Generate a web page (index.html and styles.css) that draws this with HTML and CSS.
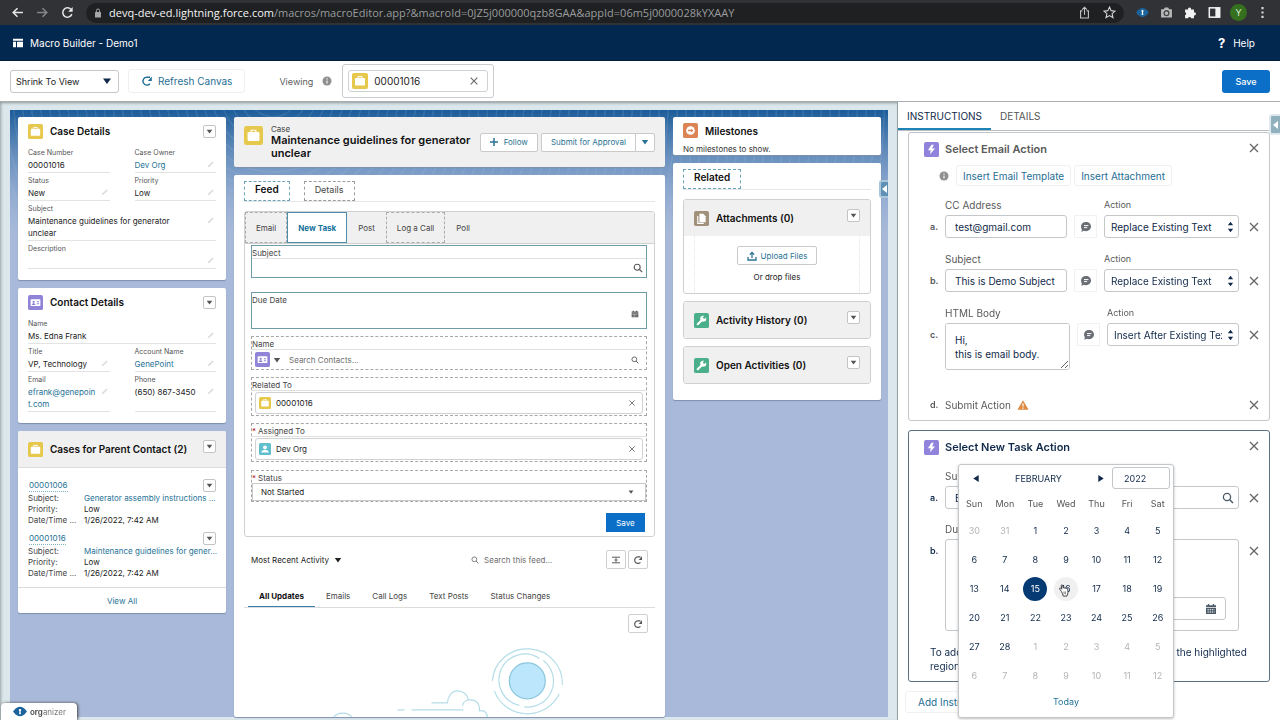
FILE: index.html
```html
<!DOCTYPE html>
<html lang="en">
<head>
    <meta charset="UTF-8">
    <meta name="viewport" content="width=device-width, initial-scale=1.0">
    <title>Macro Builder - Demo1</title>
    <link rel="stylesheet" href="styles.css">
</head>
<body>
    <!-- Shared icons -->
    <svg class="sprite" aria-hidden="true">
        <symbol id="i-down" viewBox="0 0 10 10"><path d="M1 2.5h8L5 8z" fill="currentColor"/></symbol>
        <symbol id="i-close" viewBox="0 0 12 12"><path d="M2 2l8 8M10 2l-8 8" stroke="currentColor" stroke-width="1.3" fill="none"/></symbol>
        <symbol id="i-search" viewBox="0 0 12 12"><circle cx="5" cy="5" r="3.6" fill="none" stroke="currentColor" stroke-width="1.3"/><path d="M7.7 7.7L11 11" stroke="currentColor" stroke-width="1.5"/></symbol>
        <symbol id="i-pencil" viewBox="0 0 10 10"><path d="M1 9l.6-2L7 1.8l1.4 1.4L3 8.5z" fill="currentColor"/></symbol>
        <symbol id="i-refresh" viewBox="0 0 14 14"><path d="M10.4 10.2A4.6 4.6 0 1 1 7 2.600h3.500" fill="none" stroke="currentColor" stroke-width="1.600"/><path d="M12.600 1.800v5.200H8z" fill="currentColor"/></symbol>
        <symbol id="i-case" viewBox="0 0 16 16"><rect width="16" height="16" rx="2" fill="#e5c84c"/><path d="M6 5V3.6h4V5" fill="none" stroke="#fff" stroke-width="1"/><rect x="3" y="5" width="10" height="7.6" rx="1" fill="#fff"/></symbol>
        <symbol id="i-contact" viewBox="0 0 16 16"><rect width="16" height="16" rx="2" fill="#9084d8"/><rect x="2.8" y="4.4" width="10.4" height="7.4" rx="1" fill="#fff"/><circle cx="6" cy="7.2" r="1.2" fill="#9084d8"/><path d="M4 10.6c0-2.4 4-2.4 4 0zM9.4 6.6h2.4v1H9.4zM9.4 8.8h2.4v1H9.4z" fill="#9084d8"/></symbol>
        <symbol id="i-user" viewBox="0 0 16 16"><rect width="16" height="16" rx="2" fill="#5fbfcc"/><circle cx="8" cy="5.8" r="2.6" fill="#fff"/><path d="M3 12.8c0-5 10-5 10 0z" fill="#fff"/></symbol>
        <symbol id="i-wrench" viewBox="0 0 16 16"><rect width="16" height="16" rx="2" fill="#4caf8c"/><path d="M4 12l5-5" stroke="#fff" stroke-width="2.2" stroke-linecap="round"/><path d="M12.900 5.200a3.200 3.200 0 1 1-3.600-2.300c.6-.1 1.100 0 1.500.2L9.200 4.800l1.700 1.700 1.800-1.700z" fill="#fff"/></symbol>
        <symbol id="i-files" viewBox="0 0 16 16"><rect width="16" height="16" rx="2" fill="#a2917a"/><path d="M4 5.4v7.8h6.4" fill="none" stroke="#fff" stroke-width="1.2"/><path d="M5.8 3h4l2.6 2.6V12H5.8z" fill="#fff"/></symbol>
        <symbol id="i-milestone" viewBox="0 0 16 16"><rect width="16" height="16" rx="2" fill="#dd8456"/><circle cx="8" cy="8" r="4.6" fill="#fff"/><path d="M5.4 7.200h3.200V6l2.600 2-2.600 2V8.800H5.400z" fill="#dd8456"/></symbol>
        <symbol id="i-bolt" viewBox="0 0 16 16"><rect width="16" height="16" rx="2" fill="#8f83dc"/><path d="M8 3L4.200 8.800h3L6.400 13l5.400-6.200H8.600L10.400 3z" fill="#fff"/></symbol>
        <symbol id="i-comment" viewBox="0 0 12 12"><path d="M6 1c3 0 5 2 5 4.600S9 10.200 6 10.200c-.8 0-1.500-.1-2.200-.4L1.400 11l.5-2.600C1.300 7.700 1 6.700 1 5.600 1 3 3 1 6 1z" fill="#6a6f75"/><path d="M4 4.600h4.400M4 6.600h3.200" stroke="#fff"/></symbol>
        <symbol id="i-info" viewBox="0 0 12 12"><circle cx="6" cy="6" r="5.400" fill="#8f8f8f"/><path d="M6 5.400V9M6 2.800v1.400" stroke="#fff" stroke-width="1.300"/></symbol>
        <symbol id="i-calendar" viewBox="0 0 12 12"><path d="M3.500 1v2M8.500 1v2" stroke="currentColor" stroke-width="1.400"/><path d="M1 2.200h10v2H1zM1 5h10v6H1z" fill="currentColor"/><path d="M2.500 6.800h7M2.500 9h7" stroke="#fff" stroke-width="1.100" stroke-dasharray="1.400 .8"/></symbol>
        <symbol id="i-updown" viewBox="0 0 8 14"><path d="M1 5l3-4 3 4zM1 9l3 4 3-4z" fill="currentColor"/></symbol>
        <symbol id="i-eye" viewBox="0 0 16 12"><path d="M0 6c1.500-1.500 2.500-3.500 4-4 2.500-2 5.500-2 8 0 1.500.5 2.500 2.500 4 4-1.500 1.500-2.500 3.500-4 4-2.500 2-5.500 2-8 0-1.500-.5-2.500-2.500-4-4z" fill="#1c639c"/><path d="M8 3c-2 0-1.300 2-.7 2.600L7 9h2l-.3-3.400C9.300 5 10 3 8 3z" fill="#fff"/></symbol>
    </svg>

    <div class="browser-bar">
        <svg class="nav-icon" viewBox="0 0 12 12"><path d="M11 6H2M6 2L2 6l4 4" fill="none" stroke="#e8e8e8" stroke-width="1.4"/></svg>
        <svg class="nav-icon" viewBox="0 0 12 12"><path d="M1 6h9M6 2l4 4-4 4" fill="none" stroke="#85888a" stroke-width="1.4"/></svg>
        <svg class="nav-icon" viewBox="0 0 12 12"><path d="M10 7.500A4.300 4.300 0 1 1 9.300 3.300" fill="none" stroke="#e8e8e8" stroke-width="1.400"/><path d="M10.800 1v4.200H6.600z" fill="#e8e8e8"/></svg>
        <div class="address">
            <svg class="lock" viewBox="0 0 8 10"><rect x="1" y="4" width="6" height="5.500" rx=".6" fill="#a4a6a8"/><path d="M2.400 4V2.600a1.600 1.600 0 0 1 3.200 0V4" fill="none" stroke="#a4a6a8"/></svg>
            <span class="url"><b>devq-dev-ed.lightning.force.com</b>/macros/macroEditor.app?&amp;macroId=0JZ5j000000qzb8GAA&amp;appId=06m5j0000028kYXAAY</span>
            <svg class="nav-icon" viewBox="0 0 12 12"><path d="M4 4.500H2.400v6.500h7.200V4.500H8M6 8V1.400M3.800 3.400L6 1.200l2.200 2.200" fill="none" stroke="#c4c6c8"/></svg>
            <svg class="nav-icon" viewBox="0 0 12 12"><path d="M6 1l1.500 3.300 3.600.4-2.700 2.400.8 3.600L6 8.900l-3.200 1.800.8-3.600L.9 4.700l3.600-.4z" fill="none" stroke="#d4d6d8"/></svg>
        </div>
        <div class="extensions">
            <svg class="nav-icon" viewBox="0 0 16 12"><use href="#i-eye"/></svg>
            <svg class="nav-icon" viewBox="0 0 12 12"><path d="M1 3h2.500L4.500 1.400h3L8.500 3H11v7.600H1z" fill="#b9b9b9"/><circle cx="6" cy="6.600" r="2.200" fill="none" stroke="#45484b" stroke-width="1.200"/></svg>
            <svg class="nav-icon" viewBox="0 0 12 12"><path d="M1 3.200h2.800a1.400 1.400 0 1 1 2.700 0h2.700v2.700a1.400 1.400 0 1 1 0 2.700v2.600H6.600a1.500 1.500 0 0 0-2.900 0H1V8.400a1.400 1.400 0 0 0 0-2.700z" fill="#f2f2f2"/></svg>
            <svg class="nav-icon" viewBox="0 0 12 12"><rect x="1.200" y="1.700" width="9.600" height="8.600" fill="none" stroke="#f2f2f2" stroke-width="1.400"/><path d="M6.800 1.500h4v9h-4z" fill="#f2f2f2"/></svg>
            <span class="profile">Y</span>
            <svg class="nav-icon" viewBox="0 0 12 12"><path d="M5 1h2v2H5zM5 5h2v2H5zM5 9h2v2H5z" fill="#d8d8d8"/></svg>
        </div>
    </div>

    <header class="app-header">
        <svg class="app-icon" viewBox="0 0 12 12"><path d="M0 1h12v2.200H0zM0 4.400h3.600V11H0zM4.800 4.400H12V11H4.800z" fill="#fff"/></svg>
        <h1>Macro Builder - Demo1</h1>
        <a class="help" href="#"><strong>?</strong> Help</a>
    </header>

    <div class="toolbar">
        <div class="select-box zoom-select">
            <select aria-label="Canvas size"><option>Shrink To View</option></select>
            <svg class="icon-10"><use href="#i-down"/></svg>
        </div>
        <button class="btn-ghost refresh-canvas"><svg class="icon-12"><use href="#i-refresh"/></svg>Refresh Canvas</button>
        <span class="viewing">Viewing <svg class="icon-10"><use href="#i-info"/></svg></span>
        <div class="record-picker">
            <div class="pill">
                <svg class="icon-16"><use href="#i-case"/></svg>
                <span>00001016</span>
                <button class="close" aria-label="Clear record"><svg class="icon-10"><use href="#i-close"/></svg></button>
            </div>
        </div>
        <button class="btn-brand">Save</button>
    </div>

    <main class="workspace">
        <div class="canvas-wrap">
            <div class="canvas">
                <div class="column">
                    <section class="card details">
                        <div class="details-head">
                            <svg class="icon-15"><use href="#i-case"/></svg>
                            <h2>Case Details</h2>
                            <button class="menu-btn" aria-label="Case Details menu"><svg><use href="#i-down"/></svg></button>
                        </div>
                        <dl class="fields">
                            <div class="field"><dt>Case Number</dt><dd>00001016</dd></div>
                            <div class="field"><dt>Case Owner</dt><dd><a href="#">Dev Org</a><svg class="pencil"><use href="#i-pencil"/></svg></dd></div>
                            <div class="field"><dt>Status</dt><dd>New<svg class="pencil"><use href="#i-pencil"/></svg></dd></div>
                            <div class="field"><dt>Priority</dt><dd>Low<svg class="pencil"><use href="#i-pencil"/></svg></dd></div>
                            <div class="field wide"><dt>Subject</dt><dd>Maintenance guidelines for generator unclear<svg class="pencil"><use href="#i-pencil"/></svg></dd></div>
                            <div class="field wide"><dt>Description</dt><dd><svg class="pencil"><use href="#i-pencil"/></svg></dd></div>
                        </dl>
                    </section>

                    <section class="card details">
                        <div class="details-head">
                            <svg class="icon-15"><use href="#i-contact"/></svg>
                            <h2>Contact Details</h2>
                            <button class="menu-btn" aria-label="Contact Details menu"><svg><use href="#i-down"/></svg></button>
                        </div>
                        <dl class="fields">
                            <div class="field wide"><dt>Name</dt><dd>Ms. Edna Frank<svg class="pencil"><use href="#i-pencil"/></svg></dd></div>
                            <div class="field"><dt>Title</dt><dd>VP, Technology<svg class="pencil"><use href="#i-pencil"/></svg></dd></div>
                            <div class="field"><dt>Account Name</dt><dd><a href="#">GenePoint</a><svg class="pencil"><use href="#i-pencil"/></svg></dd></div>
                            <div class="field"><dt>Email</dt><dd><a href="#">efrank@genepoint.com</a><svg class="pencil"><use href="#i-pencil"/></svg></dd></div>
                            <div class="field"><dt>Phone</dt><dd>(650) 867-3450<svg class="pencil"><use href="#i-pencil"/></svg></dd></div>
                        </dl>
                    </section>

                    <section class="card">
                        <div class="related-head">
                            <svg class="icon-15"><use href="#i-case"/></svg>
                            <h2>Cases for Parent Contact (2)</h2>
                            <button class="menu-btn" aria-label="Cases menu"><svg><use href="#i-down"/></svg></button>
                        </div>
                        <div class="case-list">
                            <article class="case-item">
                                <div class="case-top">
                                    <a href="#">00001006</a>
                                    <button class="menu-btn" aria-label="00001006 menu"><svg><use href="#i-down"/></svg></button>
                                </div>
                                <dl>
                                    <dt>Subject:</dt><dd><a href="#">Generator assembly instructions ...</a></dd>
                                    <dt>Priority:</dt><dd>Low</dd>
                                    <dt>Date/Time ...</dt><dd>1/26/2022, 7:42 AM</dd>
                                </dl>
                            </article>
                            <article class="case-item">
                                <div class="case-top">
                                    <a href="#">00001016</a>
                                    <button class="menu-btn" aria-label="00001016 menu"><svg><use href="#i-down"/></svg></button>
                                </div>
                                <dl>
                                    <dt>Subject:</dt><dd><a href="#">Maintenance guidelines for gener...</a></dd>
                                    <dt>Priority:</dt><dd>Low</dd>
                                    <dt>Date/Time ...</dt><dd>1/26/2022, 7:42 AM</dd>
                                </dl>
                            </article>
                        </div>
                        <a class="view-all" href="#">View All</a>
                    </section>
                </div>

                <div class="column">
                    <section class="card record-header">
                        <svg class="icon-19"><use href="#i-case"/></svg>
                        <div class="record-title">
                            <span>Case</span>
                            <h2>Maintenance guidelines for generator unclear</h2>
                        </div>
                        <button class="btn-neutral follow"><svg class="icon-8" viewBox="0 0 8 8"><path d="M4 0v8M0 4h8" stroke="#2a7393" stroke-width="1.500"/></svg>Follow</button>
                        <div class="btn-group">
                            <button class="btn-neutral">Submit for Approval</button>
                            <button class="btn-neutral more" aria-label="More actions"><svg class="icon-8"><use href="#i-down"/></svg></button>
                        </div>
                    </section>

                    <section class="card main-card">
                        <nav class="record-tabs">
                            <a class="active" href="#">Feed</a>
                            <a href="#">Details</a>
                        </nav>
                        <div class="composer">
                            <nav class="composer-tabs">
                                <a class="dashed" href="#">Email</a>
                                <a class="active" href="#">New Task</a>
                                <a href="#">Post</a>
                                <a class="dashed" href="#">Log a Call</a>
                                <a href="#">Poll</a>
                            </nav>
                            <form class="task-form">
                                <div class="region selected subject">
                                    <label for="task-subject">Subject</label>
                                    <div class="control lined"><input id="task-subject" type="text"><svg class="icon-10"><use href="#i-search"/></svg></div>
                                </div>
                                <div class="region selected due">
                                    <label for="task-due">Due Date</label>
                                    <div class="control"><input id="task-due" type="text"><svg class="icon-8"><use href="#i-calendar"/></svg></div>
                                </div>
                                <div class="region name">
                                    <label for="task-name">Name</label>
                                    <div class="control lined">
                                        <svg class="icon-15"><use href="#i-contact"/></svg>
                                        <svg class="icon-8 arrow"><use href="#i-down"/></svg>
                                        <input id="task-name" type="text" placeholder="Search Contacts...">
                                        <svg class="icon-8 muted"><use href="#i-search"/></svg>
                                    </div>
                                </div>
                                <div class="region lookup">
                                    <label for="task-related">Related To</label>
                                    <div class="control lined">
                                        <div class="pill">
                                            <svg class="icon-12"><use href="#i-case"/></svg>
                                            <input id="task-related" type="text" value="00001016" readonly>
                                            <button type="button" class="close" aria-label="Clear related record"><svg class="icon-8"><use href="#i-close"/></svg></button>
                                        </div>
                                    </div>
                                </div>
                                <div class="region lookup">
                                    <label for="task-assigned"><abbr>*</abbr>Assigned To</label>
                                    <div class="control lined">
                                        <div class="pill">
                                            <svg class="icon-12"><use href="#i-user"/></svg>
                                            <input id="task-assigned" type="text" value="Dev Org" readonly>
                                            <button type="button" class="close" aria-label="Clear assignee"><svg class="icon-8"><use href="#i-close"/></svg></button>
                                        </div>
                                    </div>
                                </div>
                                <div class="region status">
                                    <label for="task-status"><abbr>*</abbr>Status</label>
                                    <div class="control boxed">
                                        <select id="task-status"><option>Not Started</option></select>
                                        <svg class="icon-6"><use href="#i-down"/></svg>
                                    </div>
                                </div>
                                <button type="button" class="save-task">Save</button>
                            </form>
                        </div>

                        <div class="feed-bar">
                            <button class="sort">Most Recent Activity <svg class="icon-8"><use href="#i-down"/></svg></button>
                            <label class="feed-search"><svg class="icon-8"><use href="#i-search"/></svg><input type="text" placeholder="Search this feed..." aria-label="Search this feed"></label>
                            <button class="icon-btn" aria-label="Collapse feed"><svg class="icon-8" viewBox="0 0 10 10"><path d="M0 1.500h10M0 8.500h10M3 5h4" stroke="#555" stroke-width="1.200"/><path d="M5 1.500v7" stroke="#555"/></svg></button>
                            <button class="icon-btn" aria-label="Refresh feed"><svg class="icon-10"><use href="#i-refresh"/></svg></button>
                        </div>
                        <nav class="feed-tabs">
                            <a class="active" href="#">All Updates</a>
                            <a href="#">Emails</a>
                            <a href="#">Call Logs</a>
                            <a href="#">Text Posts</a>
                            <a href="#">Status Changes</a>
                        </nav>
                        <div class="feed-refresh">
                            <button class="icon-btn" aria-label="Refresh updates"><svg class="icon-10"><use href="#i-refresh"/></svg></button>
                        </div>
                        <svg class="illustration" viewBox="0 0 412 90" aria-hidden="true">
                            <g fill="none" stroke="#b5dde8" stroke-width="1.200">
                                <circle cx="284" cy="48" r="18" fill="#bce6fc" stroke="#88c6dc"/>
                                <path d="M296 25.500A26 26 0 1 0 276 72.500M281 74a26 26 0 0 0 19-46.500"/>
                                <path d="M249 48a35 34 0 0 1 70 4M251 58a35 34 0 0 0 65 3"/>
                                <path d="M188 70h16c0-6 4-12 10-12 6 0 10 4 11 9"/>
                                <path d="M154 77h7M168 77h52M219 73c1-8 15-8 17 1v4c4-1 8 1 8 8M90 84c4-5 14-5 18 0"/>
                            </g>
                        </svg>
                    </section>
                </div>

                <div class="column">
                    <section class="card milestones">
                        <div class="milestones-head"><svg class="icon-15"><use href="#i-milestone"/></svg><h2>Milestones</h2></div>
                        <p>No milestones to show.</p>
                    </section>
                    <section class="card related">
                        <nav class="record-tabs"><a class="active" href="#">Related</a></nav>
                        <div class="related-box">
                            <div class="related-head">
                                <svg class="icon-15"><use href="#i-files"/></svg>
                                <h2>Attachments (0)</h2>
                                <button class="menu-btn" aria-label="Attachments menu"><svg><use href="#i-down"/></svg></button>
                            </div>
                            <div class="drop-zone">
                                <button class="btn-neutral"><svg class="icon-10" viewBox="0 0 10 10"><path d="M5 7V1.500M2.800 3.600L5 1.400l2.200 2.200M1 6v3h8V6" fill="none" stroke="#2a7393" stroke-width="1.300"/></svg>Upload Files</button>
                                <span>Or drop files</span>
                            </div>
                        </div>
                        <div class="related-box">
                            <div class="related-head">
                                <svg class="icon-15"><use href="#i-wrench"/></svg>
                                <h2>Activity History (0)</h2>
                                <button class="menu-btn" aria-label="Activity History menu"><svg><use href="#i-down"/></svg></button>
                            </div>
                        </div>
                        <div class="related-box">
                            <div class="related-head">
                                <svg class="icon-15"><use href="#i-wrench"/></svg>
                                <h2>Open Activities (0)</h2>
                                <button class="menu-btn" aria-label="Open Activities menu"><svg><use href="#i-down"/></svg></button>
                            </div>
                        </div>
                    </section>
                </div>
                <button class="side-handle canvas-handle" aria-label="Open canvas side panel"></button>
            </div>
        </div>

        <aside class="panel">
            <nav class="panel-tabs">
                <a class="active" href="#">INSTRUCTIONS</a>
                <a href="#">DETAILS</a>
            </nav>
            <button class="side-handle panel-handle" aria-label="Open side panel"></button>

            <section class="action-card">
                <div class="action-head">
                    <svg class="icon-15"><use href="#i-bolt"/></svg>
                    <h2>Select Email Action</h2>
                    <button class="close" aria-label="Remove email action"><svg class="icon-12"><use href="#i-close"/></svg></button>
                </div>
                <div class="insert-row">
                    <svg class="icon-10"><use href="#i-info"/></svg>
                    <button class="btn-ghost">Insert Email Template</button>
                    <button class="btn-ghost">Insert Attachment</button>
                </div>
                <div class="step">
                    <span class="marker">a.</span>
                    <div class="step-field"><label for="cc">CC Address</label><input id="cc" type="text" value="test@gmail.com"></div>
                    <button class="comment" aria-label="Comment on CC address"><svg class="icon-12"><use href="#i-comment"/></svg></button>
                    <div class="step-action"><label for="cc-action">Action</label><div class="select-box"><select id="cc-action"><option>Replace Existing Text</option></select><svg class="updown"><use href="#i-updown"/></svg></div></div>
                    <button class="close" aria-label="Remove step a"><svg class="icon-12"><use href="#i-close"/></svg></button>
                </div>
                <div class="step">
                    <span class="marker">b.</span>
                    <div class="step-field"><label for="subject">Subject</label><input id="subject" type="text" value="This is Demo Subject"></div>
                    <button class="comment" aria-label="Comment on subject"><svg class="icon-12"><use href="#i-comment"/></svg></button>
                    <div class="step-action"><label for="subject-action">Action</label><div class="select-box"><select id="subject-action"><option>Replace Existing Text</option></select><svg class="updown"><use href="#i-updown"/></svg></div></div>
                    <button class="close" aria-label="Remove step b"><svg class="icon-12"><use href="#i-close"/></svg></button>
                </div>
                <div class="step">
                    <span class="marker">c.</span>
                    <div class="step-field body-field"><label for="body">HTML Body</label><textarea id="body">Hi,
this is email body.</textarea></div>
                    <button class="comment" aria-label="Comment on body"><svg class="icon-12"><use href="#i-comment"/></svg></button>
                    <div class="step-action"><label for="body-action">Action</label><div class="select-box"><select id="body-action"><option>Insert After Existing Text</option></select><svg class="updown"><use href="#i-updown"/></svg></div></div>
                    <button class="close" aria-label="Remove step c"><svg class="icon-12"><use href="#i-close"/></svg></button>
                </div>
                <div class="submit-step">
                    <span class="marker">d.</span>
                    <span>Submit Action</span>
                    <svg class="icon-12" viewBox="0 0 12 12"><path d="M6 1.200L11.600 10.800H.4z" fill="#dd8a42"/><path d="M6 4.200v3.400M6 8.400v1.400" stroke="#fff" stroke-width="1.200"/></svg>
                    <button class="close" aria-label="Remove step d"><svg class="icon-12"><use href="#i-close"/></svg></button>
                </div>
            </section>

            <section class="action-card current">
                <div class="action-head">
                    <svg class="icon-15"><use href="#i-bolt"/></svg>
                    <h2>Select New Task Action</h2>
                    <button class="close" aria-label="Remove task action"><svg class="icon-12"><use href="#i-close"/></svg></button>
                </div>
                <div class="step">
                    <span class="marker">a.</span>
                    <div class="step-field full">
                        <label for="new-subject">Subject</label>
                        <div class="search-box"><input id="new-subject" type="text" value="Email"><svg class="icon-12"><use href="#i-search"/></svg></div>
                    </div>
                    <button class="close" aria-label="Remove subject"><svg class="icon-12"><use href="#i-close"/></svg></button>
                </div>
                <div class="step">
                    <span class="marker">b.</span>
                    <div class="step-field full">
                        <label for="new-due">Due Date</label>
                        <div class="date-box">
                            <div class="search-box"><input id="new-due" type="text"><svg class="icon-12"><use href="#i-calendar"/></svg></div>
                        </div>
                    </div>
                    <button class="close" aria-label="Remove due date"><svg class="icon-12"><use href="#i-close"/></svg></button>
                </div>
                <p class="hint">To add more instructions for this macro, click inside the highlighted regions on the canvas.</p>

                <div class="datepicker">
                    <div class="picker-head">
                        <button aria-label="Previous month"><svg viewBox="0 0 8 10"><path d="M7 1v8L1 5z" fill="currentColor"/></svg></button>
                        <span>FEBRUARY</span>
                        <button aria-label="Next month"><svg viewBox="0 0 8 10"><path d="M1 1v8l6-4z" fill="currentColor"/></svg></button>
                        <select aria-label="Year"><option>2022</option></select>
                    </div>
                    <table>
                        <thead>
                            <tr><th>Sun</th><th>Mon</th><th>Tue</th><th>Wed</th><th>Thu</th><th>Fri</th><th>Sat</th></tr>
                        </thead>
                        <tbody>
                            <tr><td class="out">30</td><td class="out">31</td><td>1</td><td>2</td><td>3</td><td>4</td><td>5</td></tr>
                            <tr><td>6</td><td>7</td><td>8</td><td>9</td><td>10</td><td>11</td><td>12</td></tr>
                            <tr><td>13</td><td>14</td><td><span class="day picked">15</span></td><td><span class="day hovered">16<svg class="pointer" viewBox="0 0 12 14"><path d="M3.200 8L1.400 5.600c-.8-1.200.6-1.800 1.300-1L3.600 5.600 3 1.800C2.900.6 4.300.5 4.600 1.600L5.200 4.400c.3-.9 1.500-.8 1.600.2.4-.7 1.500-.5 1.600.4.500-.6 1.500-.3 1.600.6l.3 3.200c.1 1.500-.8 2.400-1.200 4.200H5.200C4.800 10.900 3.900 9.500 3.200 8z" fill="#fff" stroke="#222" stroke-width=".9"/><path d="M6 8v3M7.500 8v3" stroke="#222" stroke-width=".6"/></svg></span></td><td>17</td><td>18</td><td>19</td></tr>
                            <tr><td>20</td><td>21</td><td>22</td><td>23</td><td>24</td><td>25</td><td>26</td></tr>
                            <tr><td>27</td><td>28</td><td class="out">1</td><td class="out">2</td><td class="out">3</td><td class="out">4</td><td class="out">5</td></tr>
                            <tr><td class="out">6</td><td class="out">7</td><td class="out">8</td><td class="out">9</td><td class="out">10</td><td class="out">11</td><td class="out">12</td></tr>
                        </tbody>
                    </table>
                    <a class="today" href="#">Today</a>
                </div>
            </section>
            <button class="btn-ghost add-instruction">Add Instruction</button>
        </aside>
    </main>

    <div class="organizer"><svg viewBox="0 0 16 12"><use href="#i-eye"/></svg><span><b>org</b>anizer</span></div>
</body>
</html>
```

FILE: styles.css
```css
* {
    margin: 0;
    padding: 0;
    box-sizing: border-box;
}

body {
    font-family: Inter, "Liberation Sans", sans-serif;
    font-size: 8px;
    color: #222;
    background: white;
    height: 100vh;
    display: flex;
    flex-direction: column;
    overflow: hidden;
}

button, input, select, textarea {
    font: inherit;
    color: inherit;
    background: none;
    border: 0;
    outline: 0;
    min-width: 0;
}

select {
    appearance: none;
}

a {
    color: #1f7396;
    text-decoration: none;
}

svg {
    display: block;
    flex: none;
}

.sprite {
    position: absolute;
    width: 0;
    height: 0;
}

.icon-6 { width: 6px; height: 6px; }
.icon-8 { width: 8px; height: 8px; }
.icon-10 { width: 10px; height: 10px; }
.icon-12 { width: 12px; height: 12px; }
.icon-15 { width: 15px; height: 15px; }
.icon-16 { width: 16px; height: 16px; }
.icon-19 { width: 19px; height: 19px; }

/* Browser bar */
.browser-bar {
    flex: none;
    height: 25px;
    background: #303235;
    display: flex;
    align-items: center;
    gap: 12px;
    padding-left: 11px;
}

.nav-icon {
    width: 13px;
    height: 13px;
}

.address {
    flex: 1;
    height: 20px;
    border-radius: 10px;
    background: #1e2022;
    display: flex;
    align-items: center;
    gap: 12px;
    padding: 0 8px;
}

.lock {
    width: 8px;
    height: 10px;
    margin-right: -5px;
}

.url {
    flex: 1;
    font-size: 11px;
    color: #9a9c9e;
    white-space: nowrap;
    overflow: hidden;
    font-family: "Open Sans", Roboto, sans-serif;
}

.url b {
    font-weight: 400;
    color: #f4f4f4;
}

.extensions {
    display: flex;
    align-items: center;
    gap: 11px;
    padding-right: 11px;
}

.profile {
    width: 17px;
    height: 17px;
    margin: 0 -2px;
    border-radius: 50%;
    background: #35701f;
    color: #d8e8d0;
    font-size: 9px;
    line-height: 17px;
    text-align: center;
}

/* App header and toolbar */
.app-header {
    flex: none;
    height: 36px;
    background: #03284f;
    border-bottom: 1px solid #021f40;
    color: white;
    display: flex;
    align-items: center;
    padding: 0 25px 0 13px;
}

.app-icon {
    width: 10px;
    height: 10px;
    margin-right: 7px;
}

.app-header h1 {
    font-size: 10px;
    font-weight: 400;
}

.help {
    margin-left: auto;
    color: white;
    font-size: 10px;
    display: flex;
    align-items: center;
    gap: 8px;
}

.help strong {
    font-size: 13px;
}

.toolbar {
    flex: none;
    height: 41px;
    border-bottom: 1px solid #a9adb0;
    display: flex;
    align-items: center;
    padding: 0 10px;
    font-size: 10px;
}

.select-box {
    position: relative;
    display: flex;
    align-items: center;
    height: 23px;
    border: 1px solid #c3c7ca;
    border-radius: 3px;
}

.select-box select {
    flex: 1;
    height: 100%;
    padding-left: 6px;
    color: #10294a;
}

.select-box svg {
    margin: 0 6px;
    color: #10294a;
}

.zoom-select {
    width: 109px;
}

.zoom-select select {
    font-size: 9px;
    padding-left: 5px;
    color: #222;
}

.btn-ghost {
    height: 21px;
    padding: 0 6px;
    border: 1px solid #eef1f3;
    border-radius: 3px;
    color: #1f6e95;
    font-size: 10px;
    white-space: nowrap;
}

.refresh-canvas {
    height: 24px;
    margin-left: 9px;
    padding: 0 12px;
    display: flex;
    align-items: center;
    gap: 5px;
}

.viewing {
    display: flex;
    gap: 9px;
    align-items: center;
    margin: 0 10px 0 34px;
    font-size: 9px;
    color: #5c5c5c;
}

.pill {
    display: flex;
    align-items: center;
    border: 1px solid #cfd2d5;
    border-radius: 3px;
}

.close {
    display: flex;
    align-items: center;
    justify-content: center;
    color: #666;
}

.record-picker {
    width: 152px;
    padding: 5px;
    border: 1px solid #c9cccf;
    border-radius: 3px;
}

.record-picker .pill {
    height: 22px;
    padding: 0 8px 0 3px;
    gap: 6px;
}

.record-picker .close {
    margin-left: auto;
}

.btn-brand {
    margin-left: auto;
    width: 48px;
    height: 23px;
    border-radius: 3px;
    background: #0b6fc7;
    color: white;
    font-size: 9px;
    font-weight: 500;
}

/* Canvas */
.workspace {
    flex: 1;
    min-height: 0;
    display: flex;
}

.canvas-wrap {
    flex: 1;
    min-width: 0;
    display: flex;
    padding: 8px 9px 3px 10px;
    background: #dbe7ec;
    border-right: 1px solid #93a0a6;
    box-shadow: inset 0 3px 3px -2px #8d9699, inset 3px 0 3px -2px #9aa3a6;
}

.canvas {
    position: relative;
    flex: 1;
    min-width: 0;
    display: grid;
    grid-template-columns: 208fr 431fr 208fr;
    gap: 8px;
    padding: 7px 7px 0 8px;
    background:
        linear-gradient(transparent 0, #a8b9d9 130px),
        repeating-radial-gradient(ellipse at 30% -20px, transparent 0 7px, rgba(255, 255, 255, .09) 8px 9px),
        linear-gradient(#1b5c99, #7da0cc 110px, #a8b9d9 130px);
}

.column {
    min-width: 0;
    min-height: 0;
    display: flex;
    flex-direction: column;
    gap: 8px;
}

.card {
    background: white;
    border-radius: 2px;
    box-shadow: 0 1px 1px #7e90ac;
}

.card h2 {
    font-size: 10px;
    font-weight: 600;
    color: #111;
}

.details {
    padding: 0 10px 11px;
}

.details-head {
    height: 28px;
    display: flex;
    align-items: center;
    gap: 7px;
}

.menu-btn {
    flex: none;
    width: 13px;
    height: 13px;
    margin-left: auto;
    border: 1px solid #c4c4c4;
    border-radius: 2px;
    background: white;
    color: #555;
    display: flex;
    align-items: center;
    justify-content: center;
}

.menu-btn svg {
    width: 7px;
    height: 7px;
}

.fields {
    display: grid;
    grid-template-columns: 1fr 1fr;
    column-gap: 25px;
}

.field {
    min-width: 0;
    padding: 2px 0 1px;
    border-bottom: 1px solid #e3e3e3;
}

.wide {
    grid-column: span 2;
}

.field dt {
    font-size: 7px;
    line-height: 11px;
    color: #555;
}

.field dd {
    margin-top: 1px;
    min-height: 12px;
    line-height: 12px;
    display: flex;
    justify-content: space-between;
    gap: 4px;
}

.field dd a {
    overflow-wrap: anywhere;
}

.wide dd {
    gap: 24px;
}

.pencil {
    width: 8px;
    height: 8px;
    margin: 1px 1px 0 auto;
    color: #dcdcdc;
}

.related-head {
    height: 37px;
    padding: 0 10px;
    display: flex;
    align-items: center;
    gap: 7px;
    background: #f0f0f0;
    border-bottom: 1px solid #dcdcdc;
    border-radius: 2px 2px 0 0;
}

.related-head .menu-btn {
    margin-bottom: 5px;
}

.case-list {
    padding: 9px 10px 4px;
}

.case-top {
    display: flex;
    align-items: center;
    height: 16px;
}

.case-top a {
    line-height: 12px;
    border-bottom: 1px dotted #7fb3c6;
    margin-left: 1px;
}

.case-item {
    padding-bottom: 4px;
}

.case-item dl {
    display: grid;
    grid-template-columns: 48px 1fr;
    column-gap: 8px;
    line-height: 11px;
    white-space: nowrap;
}

.case-item dt {
    color: #444;
}

.view-all {
    display: block;
    height: 26px;
    line-height: 26px;
    text-align: center;
    border-top: 1px solid #dcdcdc;
}

/* Record header */
.record-header {
    flex: none;
    height: 50px;
    padding: 0 10px;
    display: flex;
    align-items: center;
    background: #f0f0f0;
}

.record-header > svg {
    align-self: flex-start;
    margin: 9px 8px 0 0;
}

.record-title {
    flex: 1;
    min-width: 0;
    line-height: 9px;
    color: #444;
}

.record-title h2 {
    font-size: 11px;
    line-height: 13px;
}

.btn-neutral {
    height: 19px;
    padding: 0 9px;
    border: 1px solid #cacaca;
    border-radius: 2px;
    background: white;
    color: #2a7393;
    white-space: nowrap;
}

.follow {
    display: flex;
    align-items: center;
    gap: 6px;
    margin-right: 3px;
}

.btn-group {
    display: flex;
}

.btn-group .btn-neutral:first-child {
    border-radius: 2px 0 0 2px;
}

.btn-group .more {
    width: 20px;
    padding: 0 5px;
    margin-left: -1px;
    border-radius: 0 2px 2px 0;
}

/* Feed card */
.main-card {
    flex: 1;
    min-height: 0;
    overflow: hidden;
    padding: 6px 10px 0;
}

.record-tabs {
    display: flex;
    gap: 14px;
    border-bottom: 1px solid #e6e6e6;
}

.record-tabs a {
    height: 20px;
    line-height: 15px;
    padding: 0 10px;
    border: 1px dashed #9c9c9c;
    font-size: 9px;
    color: #444;
}

.record-tabs .active {
    border-color: #6ba3b8;
    color: #111;
    font-size: 10px;
    font-weight: 600;
}

.composer {
    margin-top: 9px;
    border: 1px solid #d0d0d0;
    border-radius: 3px;
}

.composer-tabs {
    display: flex;
    height: 32px;
    background: #f0f0f0;
    border-bottom: 1px solid #d0d0d0;
}

.composer-tabs a {
    padding: 0 10px;
    line-height: 30px;
    border: 1px solid transparent;
    color: #444;
}

.composer-tabs .dashed {
    border: 1px dashed #adadad;
}

.composer-tabs .active {
    background: white;
    border-color: #4a90ab;
    color: #15719c;
    font-weight: 700;
}

.task-form {
    padding: 1px 7px 4px 6px;
    display: flex;
    flex-direction: column;
    gap: 7px;
}

.region {
    border: 1px dashed #a8a8a8;
    display: flex;
    flex-direction: column;
}

.region label {
    padding-top: 2px;
    line-height: 10px;
    color: #444;
}

.region abbr {
    color: #b3202a;
    margin-right: 2px;
}

.region.selected {
    border: 1px solid #6f9da7;
}

.subject {
    height: 33px;
    margin-bottom: 7px;
}

.due {
    height: 37px;
}

.due .control {
    padding: 0 3px 6px 0;
}

.name {
    height: 34px;
}

.lookup {
    height: 39px;
}

.status {
    height: 32px;
    margin-top: 1px;
}

.control {
    flex: 1;
    min-height: 0;
    display: flex;
    align-items: center;
    padding: 0 3px;
    color: #555;
}

.control input {
    flex: 1;
    color: #222;
}

.control input::placeholder {
    color: #6f6f6f;
}

.lined {
    border-top: 1px solid #e0e0e0;
}

.due svg, .name .muted {
    margin-right: 4px;
}

.name .arrow {
    margin: 0 8px 0 3px;
}

.control .pill {
    flex: 1;
    height: 22px;
    padding: 0 6px 0 3px;
    gap: 5px;
}

.boxed {
    border: 1px solid #c8c8c8;
    padding: 0 11px 0 8px;
}

.boxed select {
    flex: 1;
    color: #222;
}

.save-task {
    align-self: flex-end;
    width: 39px;
    height: 19px;
    margin: 4px 2px 0 0;
    background: #0b6fc7;
    color: white;
}

.feed-bar {
    display: flex;
    align-items: center;
    gap: 2px;
    margin-top: 13px;
    padding: 0 7px;
}

.sort {
    display: flex;
    gap: 5px;
    align-items: center;
    margin-right: auto;
}

.feed-search {
    display: flex;
    align-items: center;
    gap: 5px;
    width: 133px;
    color: #6f6f6f;
}

.feed-search input {
    flex: 1;
}

.feed-search input::placeholder {
    color: #6f6f6f;
}

.icon-btn {
    width: 20px;
    height: 19px;
    border: 1px solid #cfcfcf;
    border-radius: 2px;
    color: #555;
    display: flex;
    align-items: center;
    justify-content: center;
}

.feed-tabs {
    display: flex;
    margin-top: 15px;
    padding-left: 4px;
    border-bottom: 1px solid #dcdcdc;
}

.feed-tabs a {
    padding: 0 11px;
    height: 23px;
    line-height: 24px;
    color: #444;
}

.feed-tabs .active {
    font-weight: 700;
    color: #111;
    border-bottom: 1px solid #3581a8;
}

.feed-refresh {
    display: flex;
    justify-content: flex-end;
    padding: 6px 7px 0;
}

.illustration {
    width: 100%;
}

/* Milestones and related lists */
.milestones {
    height: 38px;
    padding: 6px 10px 0;
    color: #333;
}

.milestones-head {
    display: flex;
    gap: 7px;
    align-items: center;
}

.milestones p {
    margin-top: 6px;
    line-height: 11px;
}

.related {
    padding: 6px 10px 16px;
}

.related .record-tabs {
    margin-bottom: 9px;
}

.related-box {
    border: 1px solid #cfcfcf;
    border-radius: 3px;
    overflow: hidden;
}

.related-box + .related-box {
    margin-top: 7px;
}

.related-box .related-head {
    border-bottom: 0;
    height: 36px;
}

.drop-zone {
    margin: 0 10px;
    height: 57px;
    padding-top: 10px;
    border: dotted #e4e4e4;
    border-width: 0 1px;
    display: flex;
    flex-direction: column;
    align-items: center;
    gap: 7px;
}

.drop-zone .btn-neutral {
    display: flex;
    align-items: center;
    gap: 4px;
}

.side-handle {
    position: absolute;
    background: #8fb1bd;
    border: 2px solid #dfe9ed;
    border-right: 0;
    border-radius: 3px 0 0 3px;
}

.side-handle::after {
    content: "";
    display: block;
    margin: auto;
    width: 0;
    border: 4px solid transparent;
    border-right: 5px solid white;
    border-left: 0;
}

.canvas-handle {
    top: 70px;
    right: 0;
    width: 9px;
    height: 18px;
    background: #5f91b4;
    border-color: #a9c6da;
}

.panel-handle {
    top: 12px;
    right: 0;
    width: 11px;
    height: 21px;
    z-index: 1;
}

/* Instructions panel */
.panel {
    position: relative;
    flex: 0 0 382px;
    min-height: 0;
    overflow: hidden;
    font-size: 10px;
}

.panel-tabs {
    display: flex;
    height: 29px;
    border-bottom: 1px solid #b9bec2;
}

.panel-tabs a {
    padding: 0 9px;
    line-height: 29px;
    color: #555;
}

.panel-tabs .active {
    color: #10294a;
    border-bottom: 2px solid #1e84b5;
}

.action-card {
    position: relative;
    margin: 1px 10px 9px;
    padding-bottom: 4px;
    border: 1px solid #c3c7ca;
    border-radius: 3px;
    color: #5a5a5a;
}

.current {
    border-color: #5d7080;
    color: #10294a;
    padding-bottom: 8px;
}

.action-head {
    height: 32px;
    padding: 0 7px 0 15px;
    display: flex;
    align-items: center;
    gap: 6px;
}

.action-head h2 {
    font-size: 11px;
    font-weight: 600;
}

.action-head .close {
    margin-bottom: 2px;
}

.action-card .close {
    width: 16px;
    height: 23px;
    margin-left: auto;
}

.insert-row {
    display: flex;
    align-items: center;
    gap: 3px;
    margin: 0 0 13px 30px;
}

.insert-row svg {
    margin-right: 4px;
}

.step {
    display: flex;
    align-items: flex-start;
    padding: 0 7px 0 21px;
    margin-bottom: 15px;
}

.marker {
    width: 15px;
    font-weight: 600;
    font-size: 9px;
}

.step .marker, .step .comment, .step .close {
    margin-top: 16px;
    line-height: 23px;
}

.step label {
    display: block;
    line-height: 12px;
    margin-bottom: 4px;
    color: #5a5a5a;
}

.step .step-action label {
    font-size: 9px;
}

.step-field {
    width: 122px;
}

.step-field > input, .step textarea, .search-box {
    display: block;
    width: 100%;
    height: 23px;
    padding: 0 9px;
    border: 1px solid #c3c7ca;
    border-radius: 3px;
    color: #10294a;
    background: white;
}

.body-field {
    width: 125px;
}

.step textarea {
    height: 47px;
    padding: 9px;
    line-height: 14px;
}

.comment {
    width: 23px;
    height: 23px;
    margin: 0 7px;
    border: 1px solid #f0f2f4;
    display: flex;
    align-items: center;
    justify-content: center;
}

.step-action {
    flex: 1;
    min-width: 0;
}

.updown {
    width: 7px;
    height: 14px;
}

.step-action .select-box svg {
    margin: 0 4px 0 5px;
}

.step .step-action + .close, .step .full + .close {
    margin-left: 7px;
}

.submit-step {
    display: flex;
    align-items: center;
    padding: 8px 7px 0 21px;
}

.submit-step svg {
    margin-left: 6px;
}

.submit-step .close svg {
    margin-left: 0;
}

.full {
    flex: 1;
}

.current .step {
    margin-bottom: 14px;
}

.current .action-head {
    margin-bottom: 7px;
}

.search-box {
    display: flex;
    align-items: center;
    padding-right: 4px;
}

.search-box input {
    flex: 1;
}

.search-box svg {
    color: #4c5a68;
}

.date-box {
    height: 92px;
    padding: 57px 12px 0;
    border: 1px solid #c3c7ca;
    border-radius: 3px;
}

.date-box .search-box {
    padding-right: 8px;
}

.hint {
    padding: 0 8px 0 21px;
    line-height: 14px;
}

.add-instruction {
    margin-left: 7px;
    height: 22px;
    padding: 0 12px;
}

/* Date picker */
.datepicker {
    position: absolute;
    top: 33px;
    left: 49px;
    width: 216px;
    background: white;
    border: 1px solid #c3c7ca;
    border-radius: 3px;
    box-shadow: 0 1px 3px rgba(0, 0, 0, .25);
    color: #10294a;
    padding-bottom: 3px;
    z-index: 1;
}

.picker-head {
    display: flex;
    align-items: center;
    height: 26px;
    padding: 0 3px 0 13px;
    font-size: 9px;
}

.picker-head span {
    flex: 1;
    text-align: center;
}

.picker-head svg {
    width: 8px;
    height: 9px;
}

.picker-head select {
    width: 58px;
    height: 22px;
    margin-left: 7px;
    padding-left: 11px;
    border: 1px solid #c3c7ca;
    border-radius: 3px;
}

.datepicker table {
    width: 100%;
    table-layout: fixed;
    border-collapse: collapse;
    text-align: center;
    font-size: 9px;
}

.datepicker th {
    height: 25px;
    font-weight: 400;
    color: #555;
}

.datepicker td {
    height: 29px;
}

.datepicker .out {
    color: #b4b4b4;
}

.day {
    position: relative;
    display: block;
    width: 24px;
    height: 24px;
    line-height: 24px;
    margin: 0 auto;
    border-radius: 50%;
}

.picked {
    background: #063a73;
    color: white;
}

.hovered {
    background: #f0f0f0;
}

.pointer {
    position: absolute;
    left: 4px;
    top: 7px;
    width: 12px;
    height: 13px;
}

.today {
    display: block;
    text-align: center;
    line-height: 24px;
    font-size: 9px;
}

.organizer {
    position: fixed;
    left: 1px;
    bottom: 0;
    width: 76px;
    height: 17px;
    padding-left: 12px;
    display: flex;
    align-items: center;
    gap: 3px;
    background: white;
    border-radius: 4px 4px 0 0;
    box-shadow: 1px 0 3px #444;
    color: #777;
}

.organizer svg {
    width: 14px;
    height: 11px;
}

.organizer b {
    font-weight: 600;
    color: #444;
}
```
